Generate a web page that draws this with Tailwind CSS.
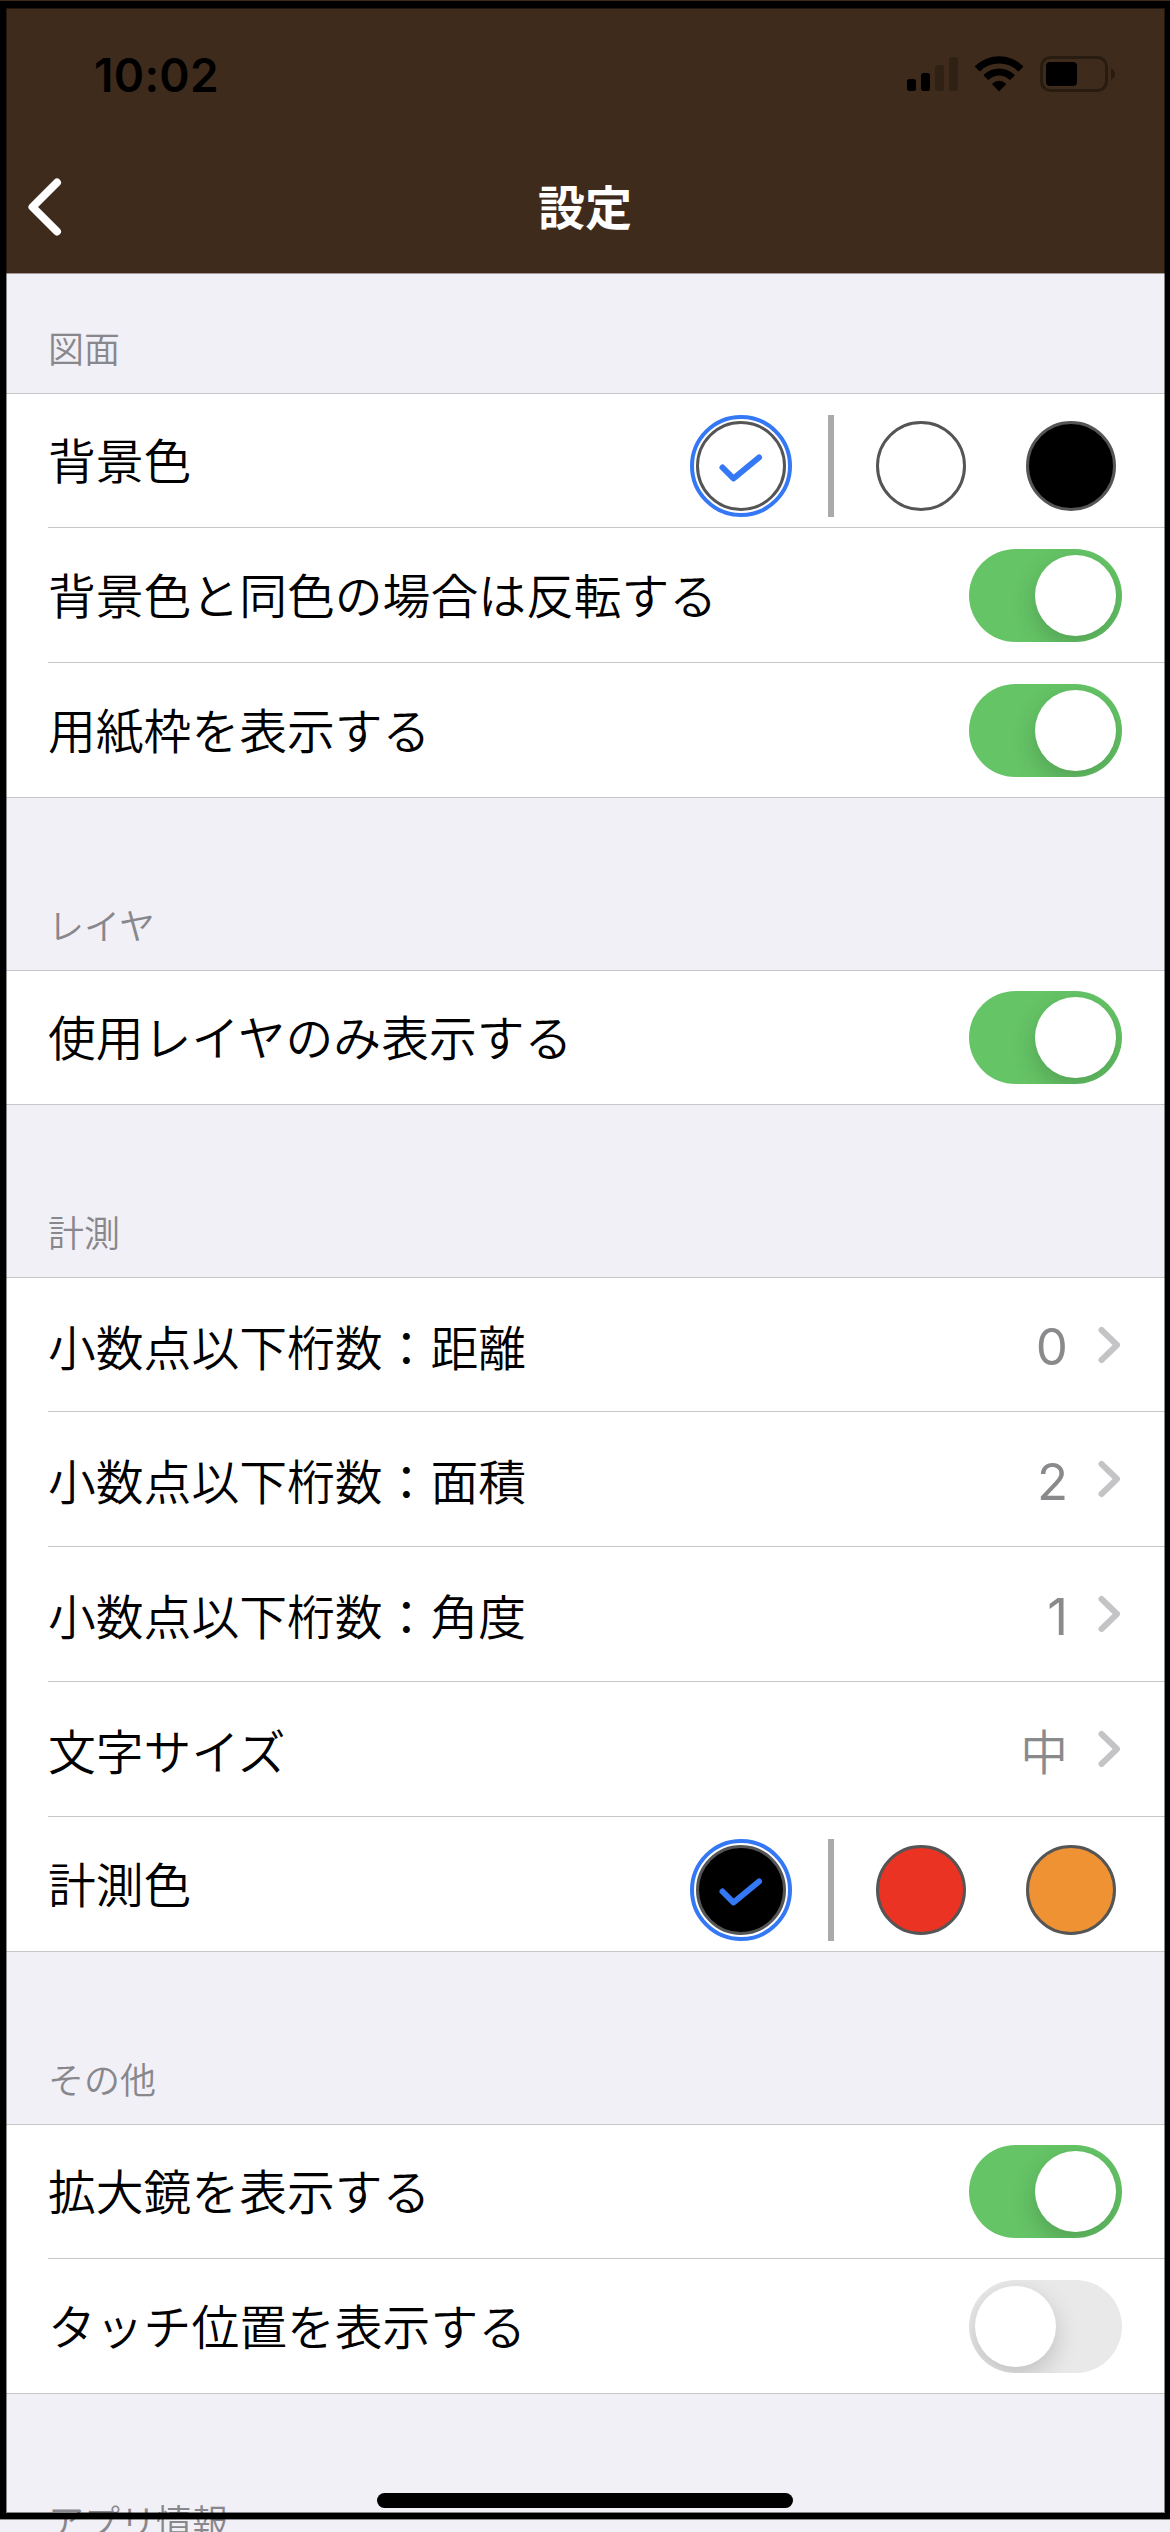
<!DOCTYPE html>
<html lang="ja">
<head>
<meta charset="utf-8">
<title>設定</title>
<script src="https://cdn.jsdelivr.net/npm/@tailwindcss/browser@4"></script>
</head>
<body class="bg-[#f1f0f6]">
<div class="relative w-[1170px] h-[2532px] overflow-hidden bg-[#f1f0f6] font-['Noto_Sans_CJK_JP',sans-serif] text-[47.8px] leading-[48px] font-[350] text-black">

  <header class="h-[274px] bg-[#3e2b1c] border-b border-[#a39a97] flex flex-col">
    <div class="h-[148px] pl-[94px] pr-[55px] flex items-center justify-between">
      <span class="font-['Inter',sans-serif] font-semibold text-[46px] tracking-[0.3px] pt-0.5">10:02</span>
      <div class="flex items-center">
        <svg class="w-[52px] h-9 mr-4" viewBox="0 0 52 36"><rect x="0" y="23" width="9" height="12" rx="2.5"/><rect x="14" y="17" width="9" height="18" rx="2.5"/><g fill="#302115"><rect x="28" y="9" width="9" height="26" rx="2.5"/><rect x="42" y="1" width="9" height="34" rx="2.5"/></g></svg>
        <svg class="w-[49px] h-9 mr-4" viewBox="0 0 49 36"><path d="M0.4 9.8A34 34 0 0 1 47.8 9.8a1 1 0 0 1 0 1.4L44 15a1 1 0 0 1-1.4 0A26.3 26.3 0 0 0 5.6 15a1 1 0 0 1-1.4 0L.4 11.2a1 1 0 0 1 0-1.4z"/><path d="M9 18.5a22 22 0 0 1 30.200 0a1 1 0 0 1 0 1.400l-3.700 3.700a1 1 0 0 1-1.400 0a14.300 14.300 0 0 0-20 0a1 1 0 0 1-1.400 0L9 19.900a1 1 0 0 1 0-1.400z"/><path d="M17.600 27.300a9.700 9.700 0 0 1 13 0a1 1 0 0 1 0 1.400L24.800 34.800a1 1 0 0 1-1.400 0L17.600 28.700a1 1 0 0 1 0-1.400z"/></svg>
        <svg class="w-[75px] h-9" viewBox="0 0 75 36"><rect x="1.500" y="1.500" width="65" height="33" rx="9" fill="none" stroke="#281c11" stroke-width="3"/><rect x="6" y="6" width="31" height="24" rx="4"/><path d="M71 12.500q4 1.500 4 5.500t-4 5.500z" fill="#281c11"/></svg>
      </div>
    </div>
    <div class="h-[118px] grid grid-cols-[80px_1fr_80px] items-center">
      <svg class="w-[40px] h-[64px] ml-6" viewBox="0 0 40 64"><path d="M33 7.500L8.500 32L33 56.500" fill="none" stroke="#fff" stroke-width="8" stroke-linecap="round" stroke-linejoin="round"/></svg>
      <h1 class="text-center text-white font-bold text-[47px] pb-1">設定</h1>
    </div>
  </header>

  <section>
    <h2 class="h-[119px] pl-12 pb-[28px] flex items-end text-[36px] leading-9 text-[#88878c]">図面</h2>
    <ul class="bg-white border-y border-[#c6c6c8]">
      <li class="h-[133px] pl-12 pr-[54px] flex items-center justify-between">
        <span class="pb-[3px]">背景色</span>
        <div class="flex items-center pt-[11px]">
          <div class="size-[102px] rounded-full border-4 border-[#3478f6] p-0.5 mr-9"><div class="size-[90px] rounded-full border-3 border-[#555] bg-white"><svg class="size-[84px]" viewBox="0 0 84 84"><path d="M23.500 43.500L34.500 54.500L60 33.500" fill="none" stroke="#3478f6" stroke-width="6" stroke-linecap="round" stroke-linejoin="round"/></svg></div></div>
          <div class="w-1.5 h-[102px] bg-[#aaa] mr-[42px]"></div>
          <div class="size-[90px] rounded-full border-3 border-[#555] bg-white mr-[60px]"></div>
          <div class="size-[90px] rounded-full border-3 border-[#555] bg-black"></div>
        </div>
      </li>
      <li class="ml-12 h-[135px] border-t border-[#c6c6c8] pr-12 flex items-center justify-between">
        <span class="pb-[3px]">背景色と同色の場合は反転する</span>
        <div class="w-[153px] h-[93px] rounded-full bg-[#65c466] p-1.5 flex justify-end overflow-hidden"><div class="size-[81px] rounded-full bg-white shadow-[0_9px_24px_rgba(0,0,0,0.18)]"></div></div>
      </li>
      <li class="ml-12 h-[135px] border-t border-[#c6c6c8] pr-12 flex items-center justify-between">
        <span class="pb-[3px]">用紙枠を表示する</span>
        <div class="w-[153px] h-[93px] rounded-full bg-[#65c466] p-1.5 flex justify-end overflow-hidden"><div class="size-[81px] rounded-full bg-white shadow-[0_9px_24px_rgba(0,0,0,0.18)]"></div></div>
      </li>
    </ul>
  </section>

  <section>
    <h2 class="h-[172px] pl-12 pb-[28px] flex items-end text-[36px] leading-9 text-[#88878c]">レイヤ</h2>
    <ul class="bg-white border-y border-[#c6c6c8]">
      <li class="h-[133px] pl-12 pr-12 flex items-center justify-between">
        <span class="pb-[3px]">使用レイヤのみ表示する</span>
        <div class="w-[153px] h-[93px] rounded-full bg-[#65c466] p-1.5 flex justify-end overflow-hidden"><div class="size-[81px] rounded-full bg-white shadow-[0_9px_24px_rgba(0,0,0,0.18)]"></div></div>
      </li>
    </ul>
  </section>

  <section>
    <h2 class="h-[172px] pl-12 pb-[28px] flex items-end text-[36px] leading-9 text-[#88878c]">計測</h2>
    <ul class="bg-white border-y border-[#c6c6c8]">
      <li class="h-[133px] pl-12 pr-[49px] flex items-center justify-between">
        <span class="pt-0.5">小数点以下桁数：距離</span>
        <div class="flex items-center text-[#8a8a8d]"><span class="font-['Inter',sans-serif] font-normal text-[51px] pt-[5px] mr-[29px]">0</span><svg class="w-6 h-[38px]" viewBox="0 0 24 38"><path d="M4.500 4L20 19L4.500 34" fill="none" stroke="#c4c4c6" stroke-width="6" stroke-linecap="round" stroke-linejoin="round"/></svg></div>
      </li>
      <li class="ml-12 h-[135px] border-t border-[#c6c6c8] pr-[49px] flex items-center justify-between">
        <span class="pt-0.5">小数点以下桁数：面積</span>
        <div class="flex items-center text-[#8a8a8d]"><span class="font-['Inter',sans-serif] font-normal text-[51px] pt-[5px] mr-[29px]">2</span><svg class="w-6 h-[38px]" viewBox="0 0 24 38"><path d="M4.500 4L20 19L4.500 34" fill="none" stroke="#c4c4c6" stroke-width="6" stroke-linecap="round" stroke-linejoin="round"/></svg></div>
      </li>
      <li class="ml-12 h-[135px] border-t border-[#c6c6c8] pr-[49px] flex items-center justify-between">
        <span class="pt-0.5">小数点以下桁数：角度</span>
        <div class="flex items-center text-[#8a8a8d]"><span class="font-['Inter',sans-serif] font-normal text-[51px] pt-[5px] mr-[29px]">1</span><svg class="w-6 h-[38px]" viewBox="0 0 24 38"><path d="M4.500 4L20 19L4.500 34" fill="none" stroke="#c4c4c6" stroke-width="6" stroke-linecap="round" stroke-linejoin="round"/></svg></div>
      </li>
      <li class="ml-12 h-[135px] border-t border-[#c6c6c8] pr-[49px] flex items-center justify-between">
        <span class="pt-0.5">文字サイズ</span>
        <div class="flex items-center text-[#8a8a8d]"><span class="pt-0.5 mr-[29px]">中</span><svg class="w-6 h-[38px]" viewBox="0 0 24 38"><path d="M4.500 4L20 19L4.500 34" fill="none" stroke="#c4c4c6" stroke-width="6" stroke-linecap="round" stroke-linejoin="round"/></svg></div>
      </li>
      <li class="ml-12 h-[135px] border-t border-[#c6c6c8] pr-[54px] flex items-center justify-between">
        <span class="pb-[3px]">計測色</span>
        <div class="flex items-center pt-3">
          <div class="size-[102px] rounded-full border-4 border-[#3478f6] p-0.5 mr-9"><div class="size-[90px] rounded-full border-3 border-[#555] bg-black"><svg class="size-[84px]" viewBox="0 0 84 84"><path d="M23.500 43.500L34.500 54.500L60 33.500" fill="none" stroke="#3478f6" stroke-width="6" stroke-linecap="round" stroke-linejoin="round"/></svg></div></div>
          <div class="w-1.5 h-[102px] bg-[#aaa] mr-[42px]"></div>
          <div class="size-[90px] rounded-full border-3 border-[#555] bg-[#ea3323] mr-[60px]"></div>
          <div class="size-[90px] rounded-full border-3 border-[#555] bg-[#ef9234]"></div>
        </div>
      </li>
    </ul>
  </section>

  <section>
    <h2 class="h-[172px] pl-12 pb-[28px] flex items-end text-[36px] leading-9 text-[#88878c]">その他</h2>
    <ul class="bg-white border-y border-[#c6c6c8]">
      <li class="h-[133px] pl-12 pr-12 flex items-center justify-between">
        <span class="pb-[3px]">拡大鏡を表示する</span>
        <div class="w-[153px] h-[93px] rounded-full bg-[#65c466] p-1.5 flex justify-end overflow-hidden"><div class="size-[81px] rounded-full bg-white shadow-[0_9px_24px_rgba(0,0,0,0.18)]"></div></div>
      </li>
      <li class="ml-12 h-[135px] border-t border-[#c6c6c8] pr-12 flex items-center justify-between">
        <span class="pb-[3px]">タッチ位置を表示する</span>
        <div class="w-[153px] h-[93px] rounded-full bg-[#e9e9e9] p-1.5 flex justify-start overflow-hidden"><div class="size-[81px] rounded-full bg-white shadow-[0_9px_24px_rgba(0,0,0,0.18)]"></div></div>
      </li>
    </ul>
  </section>

  <section>
    <h2 class="h-[172px] pl-12 pb-[28px] flex items-end text-[36px] leading-9 text-[#88878c]">アプリ情報</h2>
  </section>

  <div class="absolute left-[377px] top-[2493px] w-[416px] h-[15px] rounded-full bg-black"></div>
  <div class="absolute left-0 top-px w-[1170px] h-[2518px] border-black border-t-[7px] border-b-[6px] border-l-6 border-r-5 shadow-[inset_0_0_0_1px_rgba(0,0,0,0.45),0_1px_0_rgba(0,0,0,0.4)]"></div>
</div>
</body>
</html>
